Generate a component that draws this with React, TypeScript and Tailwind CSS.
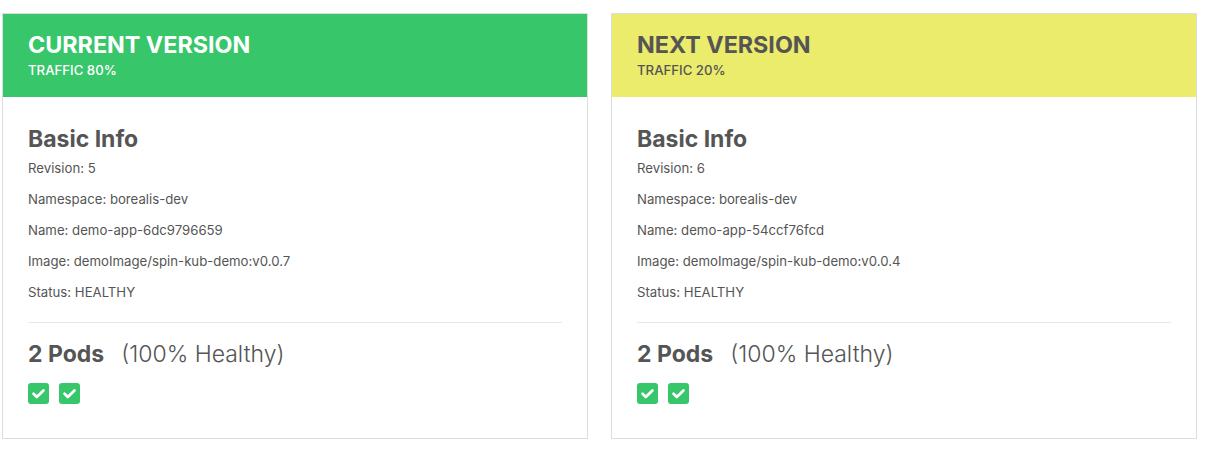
const versions = [
  {
    title: 'CURRENT VERSION',
    traffic: 'TRAFFIC 80%',
    headerClass: 'bg-[#37c66a] text-white',
    revision: '5',
    namespace: 'borealis-dev',
    name: 'demo-app-6dc9796659',
    image: 'demoImage/spin-kub-demo:v0.0.7',
    status: 'HEALTHY',
    pods: 2,
  },
  {
    title: 'NEXT VERSION',
    traffic: 'TRAFFIC 20%',
    headerClass: 'bg-[#ebeb6c] text-[#555555]',
    revision: '6',
    namespace: 'borealis-dev',
    name: 'demo-app-54ccf76fcd',
    image: 'demoImage/spin-kub-demo:v0.0.4',
    status: 'HEALTHY',
    pods: 2,
  },
];

function PodCheck() {
  return (
    <span className="w-[21px] h-[21px] rounded-[3px] bg-[#37c66a] flex items-center justify-center">
      <svg viewBox="0 0 20 20" className="w-[21px] h-[21px]">
        <path d="M5.3 10.3l3.1 3 6.3-6.2" fill="none" stroke="white" strokeWidth="2.6" strokeLinecap="round" strokeLinejoin="round" />
      </svg>
    </span>
  );
}

type Version = (typeof versions)[number];

function VersionCard({ v }: { v: Version }) {
  const rows = [
    ['Revision', v.revision],
    ['Namespace', v.namespace],
    ['Name', v.name],
    ['Image', v.image],
    ['Status', v.status],
  ];
  return (
    <div className="w-[586px] border border-[#dddddd] bg-white">
      <div className={`${v.headerClass} h-[83px] pl-[25px] pt-[18px]`}>
        <div className="text-[23.3px] leading-[26px] font-bold">{v.title}</div>
        <div className="text-[13.2px] leading-[18px] font-medium mt-[3px]">{v.traffic}</div>
      </div>
      <div className="px-[25px] pt-[29px] pb-[34px] text-[#555555]">
        <h2 className="text-[23px] leading-[26px] font-bold">Basic Info</h2>
        <div className="text-[13.2px] mt-px">
          {rows.map(([k, val]) => (
            <div key={k} className="leading-[31px]">
              {k}: {val}
            </div>
          ))}
        </div>
        <div className="mt-[14px] border-t border-[#e8e8e8]" />
        <div className="mt-[18px] text-[23px] leading-[26px] flex gap-[17px]">
          <span className="font-bold">{v.pods} Pods</span>
          <span className="font-light">(100% Healthy)</span>
        </div>
        <div className="mt-4 flex gap-[10px]">
          {Array.from({ length: v.pods }).map((_, i) => (
            <PodCheck key={i} />
          ))}
        </div>
      </div>
    </div>
  );
}

export default function App() {
  return (
    <div className="min-h-[452px] bg-white pt-[13px] pl-[2px] font-['Inter',sans-serif]">
      <div className="flex gap-[23px]">
        {versions.map((v) => (
          <VersionCard key={v.title} v={v} />
        ))}
      </div>
    </div>
  );
}
